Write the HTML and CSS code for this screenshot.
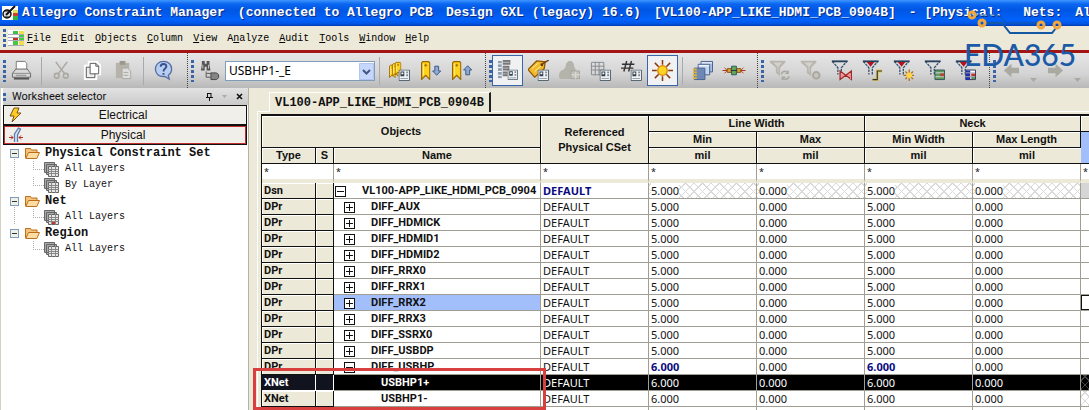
FILE: index.html
```html
<!DOCTYPE html>
<html lang="en">
<head>
    <meta charset="UTF-8">
    <meta name="viewport" content="width=device-width, initial-scale=1.0">
    <title>Allegro Constraint Manager</title>
    <link rel="stylesheet" href="styles.css">
</head>
<body>
    <!-- shared icon parts -->
    <svg class="defs" aria-hidden="true">
        <symbol id="badge" viewBox="0 0 12 12">
            <path d="M.5.5h11v11H.5z" fill="#eef2f5" stroke="#52616b"/>
            <path d="M2 2h4v5H2z" fill="#31404b"/><path d="M3 3h2v2H3z" fill="#fff"/>
            <path d="M8 2h2v2H8zM8 5h2v2H8zM2 9h8v1H2z" fill="#7f8d96"/>
        </symbol>
        <symbol id="funnel" viewBox="0 0 20 20">
            <path d="M1.5 1.5h17L12 9v8M1.5 1.5 8 9v8" fill="none" stroke="#34506e" stroke-width="1.5" stroke-dasharray="3 1"/>
            <path d="M1 1.500h18" stroke="#27405c" stroke-width="2"/>
        </symbol>
        <symbol id="funnel-off" viewBox="0 0 20 20">
            <path d="M1 1h18v2l-6 6v10l-5-4V9L1 3z" fill="#b8b6ad"/>
            <path d="M5 3h10l-4 5v6l-1-1V8z" fill="#d3d2cc"/>
        </symbol>
        <symbol id="bookmark" viewBox="0 0 10 20">
            <path d="M.7 2 2 .7h6L9.300 2v17.300L5 15 .7 19.300z" fill="#ffd21c" stroke="#9a6500" stroke-width="1.300"/>
            <path d="M5 3v3M3.500 4.500h3" stroke="#9a6500"/><path d="M2.500 3v12" stroke="#fff19a"/>
        </symbol>
        <symbol id="folder" viewBox="0 0 15 12">
            <path d="M.5 11V1.500h5l1 1.500H12v3" fill="#f7c27a" stroke="#b86f1d"/>
            <path d="M.8 11.500 3.500 5.500h11l-2.700 6z" fill="#ffdca2" stroke="#b86f1d"/>
        </symbol>
        <symbol id="sheets" viewBox="0 0 15 15">
            <path d="M.5.5h10v10H.5zM2.500 2.500h10v10h-10z" fill="#aaa" stroke="#666"/>
            <path d="M4.500 4.500h10v10h-10z" fill="#e6e6e6" stroke="#666"/>
            <path d="M4 7.500h11M4 9.500h11M4 11.500h11M7.500 4v11M11.500 4v11" stroke="#888"/>
        </symbol>
        <symbol id="arrow" viewBox="0 0 16 14">
            <path d="M0 7 8 0v4h8v6H8v4z" fill="#aaa9a2"/>
        </symbol>
    </svg>

    <header class="titlebar">
        <svg class="app-icon" viewBox="0 0 16 16">
            <path d="M0 1h16v14H0z" fill="#fff"/><path d="M11 5h5v3h-5z" fill="#dfe05a"/><path d="M11 8h5v3h-5z" fill="#d0402c"/><path d="M11 11h5v4h-5z" fill="#31b34a"/>
            <circle cx="5" cy="9" r="4" fill="#ddd" stroke="#111" stroke-width="1.500"/><path d="m4 10 9-9" stroke="#111" stroke-width="2"/><path d="M2 6h6M3 12h5" stroke="#111"/>
        </svg>
        <h1 class="title">
            <span>Allegro Constraint Manager</span>
            <span>(connected to Allegro PCB</span>
            <span>Design GXL (legacy) 16.6)</span>
            <span>[VL100-APP_LIKE_HDMI_PCB_0904B]</span>
            <span>- [Physical:</span>
            <span>&nbsp;Nets:</span>
            <span>Al</span>
        </h1>
    </header>

    <nav class="menubar">
        <span class="grip"></span>
        <svg class="menu-icon" viewBox="0 0 16 16">
            <path d="M0 0h16v16H0z" fill="#fff"/><path d="M5 1h5v3H5z" fill="#3fc04d"/><path d="M11 1h5v3h-5zM11 11h5v4h-5z" fill="#eee04a"/><path d="M5 7h5v3H5z" fill="#c52c22"/><path d="M5 11h5v4H5zM11 5h5v5h-5z" fill="#46c843"/>
            <path d="M0 4.500h16M0 7.500h16M0 10.500h16M0 15.500h16" stroke="#aab"/>
        </svg>
        <a href="#"><u>F</u>ile</a>
        <a href="#"><u>E</u>dit</a>
        <a href="#"><u>O</u>bjects</a>
        <a href="#"><u>C</u>olumn</a>
        <a href="#"><u>V</u>iew</a>
        <a href="#">A<u>n</u>alyze</a>
        <a href="#"><u>A</u>udit</a>
        <a href="#"><u>T</u>ools</a>
        <a href="#"><u>W</u>indow</a>
        <a href="#"><u>H</u>elp</a>
    </nav>

    <div class="toolbar">
        <div class="tool-group">
            <span class="grip"></span>
            <button class="tool" aria-label="Print"><svg viewBox="0 0 22 22"><path d="M5.500 10V1.500h9l2 2V10" fill="#fff" stroke="#777"/><path d="M1.500 14 5 9.500h12l3.500 4.500v4h-19z" fill="#d9d9d9" stroke="#666"/><path d="M2 14h18M5 16h11" stroke="#888"/><path d="M3 19.500h16" stroke="#555" stroke-width="2"/></svg></button>
            <span class="sep"></span>
            <button class="tool" aria-label="Cut" disabled><svg viewBox="0 0 22 22" fill="none" stroke="#aaa89f" stroke-width="1.600"><path d="m5 2 9 12M17 2 8 14"/><circle cx="6" cy="16.500" r="2.500"/><circle cx="15.500" cy="16.500" r="2.500"/></svg></button>
            <button class="tool" aria-label="Copy"><svg viewBox="0 0 22 22"><path d="M2 5h4V1h10l4 4v11h-4v5H2z" fill="#fff"/><path d="M4.500 7.500h9v11h-9z" fill="#eee" stroke="#555"/><path d="M8.500 3.500h6l3 3v8h-9z" fill="#fff" stroke="#555"/><path d="M14.500 3.500v3h3" fill="none" stroke="#555"/></svg></button>
            <button class="tool" aria-label="Paste" disabled><svg viewBox="0 0 22 22"><path d="M3 3h14v16H3z" fill="#b5b3aa"/><path d="M7 1h6v4H7z" fill="#9a988f"/><path d="M9.500 8.500h6l3 3v8h-9z" fill="#ddd" stroke="#aaa89f"/><path d="M11 13h5M11 16h5" stroke="#aaa89f"/></svg></button>
            <span class="sep"></span>
            <button class="tool" aria-label="Help"><svg viewBox="0 0 22 22"><path d="M11 1.500c5 0 8.500 3.300 8.500 8 0 3-1 5-3.500 6.500l1 4-4.500-2.800C6 18 2.500 14 2.500 9.500s3.500-8 8.500-8z" fill="#b9cdf0" stroke="#566fa6" stroke-width="1.400"/><path d="M8 7c.2-4 6.500-3.600 6 0-.3 2-3 2.200-3 5M11 13.500v2" fill="none" stroke="#34508f" stroke-width="2"/></svg></button>
        </div>

        <div class="tool-group">
            <span class="grip"></span>
            <button class="tool" aria-label="Find object"><svg viewBox="0 0 22 22"><path d="M3 1h3v3h2V1h3v4l1 6H8V7H6v4H2l1-6z" fill="#555"/><path d="M4 5v4M10 5v4" stroke="#ccc"/><path d="M7.500 12v6H12M8 14h5" fill="none" stroke="#555"/><path d="M12.500 13.500h6l2 2v3l-2 2h-6z" fill="#858585" stroke="#444"/></svg></button>
            <label class="combo">
                <select aria-label="Object name"><option>USBHP1-_E</option></select>
                <svg class="combo-arrow" viewBox="0 0 15 17"><path d="M.5.5h14v16H.5z" fill="#c7d7fb" stroke="#afc4f2"/><path d="m4 7 3.500 3.500L11 7" fill="none" stroke="#40587f" stroke-width="2"/></svg>
            </label>
            <span class="sep"></span>
            <button class="tool" aria-label="Bookmarks"><svg viewBox="0 0 22 22"><use href="#bookmark" x="0" y="4" width="7" height="16"/><use href="#bookmark" x="3" y="2" width="7" height="17"/><use href="#bookmark" x="6" y="0" width="7" height="18"/><use href="#badge" x="10" y="10" width="12" height="12"/></svg></button>
            <button class="tool" aria-label="Next bookmark"><svg viewBox="0 0 22 22"><use href="#bookmark" x="1" y="1" width="10" height="20"/><path d="M15.500 6.500h4v5h2.200L17.500 16l-4.300-4.500h2.300z" fill="#8ea9d4" stroke="#3d5784"/></svg></button>
            <button class="tool" aria-label="Previous bookmark"><svg viewBox="0 0 22 22"><use href="#bookmark" x="1" y="1" width="10" height="20"/><path d="M15.500 15.500h4v-5h2.200L17.500 6l-4.300 4.500h2.300z" fill="#8ea9d4" stroke="#3d5784"/></svg></button>
        </div>

        <div class="tool-group">
            <span class="grip"></span>
            <button class="tool pressed" aria-label="Worksheet rows"><svg viewBox="0 0 22 22"><path d="M1 1h4v18H1z" fill="#8fa0b3"/><path d="M1 4h4M1 8h4M1 12h4M1 16h4" stroke="#fff"/><path d="M6 0h8v5H6zM6 6h7v5H6zM6 12h5v5H6z" fill="#777"/><path d="M6 2.500h7M6 8.500h6M6 14.500h4" stroke="#bbb"/><use href="#badge" x="11" y="10" width="11" height="11"/></svg></button>
            <button class="tool" aria-label="Tag"><svg viewBox="0 0 22 22"><path d="m0 10 9-9 9 1-1 7-10 9z" fill="#f3b92d" stroke="#8d5500" stroke-width="1.300"/><path d="m4 9 7-6M7 12l8-7" stroke="#fff0a0"/><circle cx="14.500" cy="5" r="1.500" fill="#633b00"/><path d="m15 4 7-4" stroke="#7b3d11" stroke-width="1.500"/><use href="#badge" x="10" y="10" width="12" height="12"/></svg></button>
            <button class="tool" aria-label="Group" disabled><svg viewBox="0 0 22 22"><path d="M7 7c0-8 9-8 9 0l2 4c3 2 2 8 0 9H2c-4-2-2-9 3-10z" fill="#b5b4aa"/><path d="M12.500 11.500h9v8h-9z" fill="#c3c1b8" stroke="#a5a49c"/><path d="M13 15.500h9M17.500 12v8" stroke="#ddd"/></svg></button>
            <button class="tool" aria-label="Grid"><svg viewBox="0 0 22 22"><path d="M1.500 2.500h13v13h-13zM1 6.500h14M1 10.500h14M5.500 2v14M9.500 2v14" fill="none" stroke="#85898f"/><use href="#badge" x="10" y="10" width="12" height="12"/></svg></button>
            <button class="tool" aria-label="Numbers"><svg viewBox="0 0 22 22"><path d="m6 1-3 11M11 1 8 12M1 4.500h13M0 8.500h13" stroke="#333" stroke-width="1.500"/><use href="#badge" x="10" y="10" width="12" height="12"/></svg></button>
            <button class="tool pressed" aria-label="Highlight"><svg viewBox="0 0 22 22"><path d="M11 0v5M11 17v5M0 11h5M17 11h5M3 3l4 4M15 15l4 4M19 3l-4 4M7 15l-4 4" stroke="#8a3b0c" stroke-width="1.600"/><circle cx="11" cy="11" r="5" fill="#ffd323" stroke="#d88500" stroke-width="1.300"/></svg></button>
            <span class="sep"></span>
            <button class="tool" aria-label="Windows"><svg viewBox="0 0 22 22"><path d="M9.500 1.500h12v11h-12z" fill="#a9bee3" stroke="#43608f"/><path d="M6.500 4.500h12v11h-12z" fill="#c7d6ef" stroke="#43608f"/><path d="M2.500 8.500h11v12h-11z" fill="#6e88b5" stroke="#43608f"/><path d="M7 6h11M10 3h11" stroke="#fff"/><path d="M1 10h4M1 13h4M1 16h4M1 19h4" stroke="#e4b530" stroke-width="2"/></svg></button>
            <button class="tool" aria-label="Connector"><svg class="wide" viewBox="0 0 24 22"><path d="M0 11h24" stroke="#a92d18"/><path d="m2 8 3 3-3 3M22 8l-3 3 3 3" fill="none" stroke="#b9401e"/><path d="M5 9h4v4H5zM15 9h4v4h-4z" fill="#dd9f2d" stroke="#8b5a13"/><path d="M9.500 6.500h5v9h-5z" fill="#67a85b" stroke="#24595d"/><path d="M9 11h6" stroke="#234"/></svg></button>
        </div>

        <div class="tool-group">
            <span class="grip"></span>
            <button class="tool" aria-label="Refresh filter" disabled><svg viewBox="0 0 22 22"><use href="#funnel-off" width="18" height="18"/><path d="M13 15c1-4 6-4 7-1M21 17c-1 4-6 4-7 1M20 11v3h-3M14 21v-3h3" fill="none" stroke="#aaa89f" stroke-width="1.500"/></svg></button>
            <button class="tool" aria-label="Clear filter" disabled><svg viewBox="0 0 22 22"><use href="#funnel-off" width="18" height="18"/><circle cx="17" cy="16" r="3.500" fill="#c5c4bd" stroke="#aaa89f" stroke-width="2"/></svg></button>
            <button class="tool" aria-label="Filter nets"><svg viewBox="0 0 22 22"><use href="#funnel" width="18" height="18"/><path d="M9.500 11.500 15.500 16l6-4.500v9L15.500 16l-6 4.500z" fill="#e99" stroke="#a22727" stroke-width="1.300"/></svg></button>
            <button class="tool" aria-label="Filter pins"><svg viewBox="0 0 22 22"><use href="#funnel" width="18" height="18"/><path d="M5 2h8L9 7z" fill="#b01421"/><path d="M11 20.500h5v-9h5" fill="none" stroke="#e0c65a" stroke-width="3"/><path d="M11 20.500h5v-9h5" fill="none" stroke="#333" stroke-width="1.200"/></svg></button>
            <button class="tool" aria-label="Filter new"><svg viewBox="0 0 22 22"><use href="#funnel" width="18" height="18"/><path d="M5 2h8L9 7z" fill="#b01421"/><path d="M17 10v12M11 16h12M13 12l8 8M21 12l-8 8" stroke="#ad6d1a" stroke-width="1.300"/><circle cx="17" cy="16" r="3" fill="#ffd54a"/></svg></button>
            <button class="tool" aria-label="Filter sheet"><svg viewBox="0 0 22 22"><use href="#funnel" width="18" height="18"/><path d="M11.500 10.500h10v10h-10z" fill="#5d9a60" stroke="#355"/><path d="M12 13.500h9M12 17.500h9" stroke="#dedede"/><path d="M17 14h4v3h-4z" fill="#b64435"/></svg></button>
            <button class="tool" aria-label="Filter columns"><svg viewBox="0 0 22 22"><use href="#funnel" width="18" height="18"/><path d="M5 2h8L9 7z" fill="#b01421"/><path d="M11.500 10.500h10v10h-10z" fill="#fff" stroke="#335"/><path d="M11 11h5v10h-5z" fill="#2330a0"/><path d="M17 14h4v3h-4z" fill="#c53526"/><path d="M17 17h4v3h-4z" fill="#519853"/><path d="M11 13.500h10M11 17.500h10" stroke="#aab"/></svg></button>
        </div>

        <div class="tool-group">
            <span class="grip"></span>
            <button class="tool" aria-label="Back" disabled><svg viewBox="0 0 22 22"><use href="#arrow" x="3" y="4" width="16" height="14"/></svg></button>
            <button class="tool-more" aria-label="Back history" disabled><svg viewBox="0 0 7 4"><path d="M0 0h7L3.500 4z" fill="#aaa9a2"/></svg></button>
            <button class="tool" aria-label="Forward" disabled><svg class="flip" viewBox="0 0 22 22"><use href="#arrow" x="3" y="4" width="16" height="14"/></svg></button>
            <button class="tool-more" aria-label="Forward history" disabled><svg viewBox="0 0 7 4"><path d="M0 0h7L3.500 4z" fill="#aaa9a2"/></svg></button>
        </div>
    </div>

    <div class="workspace">
        <aside class="selector">
            <div class="selector-head">
                <span class="grip small"></span>
                <h2>Worksheet selector</h2>
                <button class="head-btn" aria-label="Pin"><svg viewBox="0 0 9 9"><path d="M2.500 1v4M6 1v4M2 1.500h4M1 5.500h7M4.500 6v3" fill="none" stroke="#111"/></svg></button>
                <button class="head-btn" aria-label="Options"><svg viewBox="0 0 9 9"><path d="M2 3h5L4.500 6z" fill="#aaa"/></svg></button>
                <button class="head-btn" aria-label="Close"><svg viewBox="0 0 9 9"><path d="m2 2 5 5M7 2 2 7" stroke="#111" stroke-width="1.600"/></svg></button>
            </div>
            <button class="domain"><svg viewBox="0 0 14 16"><path d="M5 1h5L8 6h4L3 15l2-6H1z" fill="#ffc928" stroke="#7a5410"/></svg>Electrical</button>
            <button class="domain active"><svg viewBox="0 0 14 16"><path d="M5.500 15V7l4-6 2 1-3 6v7" fill="#dbe6f5" stroke="#5c7cab" stroke-width="1.300"/><path d="M0 10.500h4M14 10.500h-4M2 8.500l2 2-2 2M12 8.500l-2 2 2 2" fill="none" stroke="#b02828"/></svg>Physical</button>
            <ul class="tree">
                <li>
                    <div class="branch"><button class="toggle" aria-label="Collapse"></button><svg class="folder"><use href="#folder"/></svg>Physical Constraint Set</div>
                    <ul>
                        <li class="leaf"><svg><use href="#sheets"/></svg>All Layers</li>
                        <li class="leaf"><svg><use href="#sheets"/></svg>By Layer</li>
                    </ul>
                </li>
                <li>
                    <div class="branch"><button class="toggle" aria-label="Collapse"></button><svg class="folder"><use href="#folder"/></svg>Net</div>
                    <ul>
                        <li class="leaf"><svg viewBox="0 0 15 15"><use href="#sheets"/><path d="M8 12h3v2H8z" fill="#c33"/></svg>All Layers</li>
                    </ul>
                </li>
                <li>
                    <div class="branch"><button class="toggle" aria-label="Collapse"></button><svg class="folder"><use href="#folder"/></svg>Region</div>
                    <ul>
                        <li class="leaf"><svg><use href="#sheets"/></svg>All Layers</li>
                    </ul>
                </li>
            </ul>
        </aside>

        <main class="sheet">
            <div class="tabs"><button class="tab">VL100-APP_LIKE_HDMI_PCB_0904B</button></div>
            <div class="grid-wrap">
            <table class="grid">
                <colgroup><col class="c-type"><col class="c-s"><col class="c-name"><col class="c-val"><col class="c-val"><col class="c-val"><col class="c-val"><col class="c-val"><col></colgroup>
                <thead>
                    <tr><th colspan="3" rowspan="2">Objects</th><th rowspan="3">Referenced<br>Physical CSet</th><th colspan="2">Line Width</th><th colspan="2">Neck</th><th></th></tr>
                    <tr><th>Min</th><th>Max</th><th>Min Width</th><th>Max Length</th><th rowspan="2" class="current"></th></tr>
                    <tr><th>Type</th><th>S</th><th>Name</th><th>mil</th><th>mil</th><th>mil</th><th>mil</th></tr>
                </thead>
                <tbody>
                    <tr class="filter"><td colspan="2">*</td><td>*</td><td>*</td><td>*</td><td>*</td><td>*</td><td>*</td><td>*</td></tr>
                    <tr class="design"><th>Dsn</th><th></th><td class="name lvl0"><button class="box minus" aria-label="Collapse"></button>VL100-APP_LIKE_HDMI_PCB_0904</td><td class="set">DEFAULT</td><td class="hatch"><span>5.000</span></td><td class="hatch"><span>0.000</span></td><td class="hatch"><span>5.000</span></td><td class="hatch"><span>0.000</span></td><td class="gray"></td></tr>
                    <tr><th>DPr</th><th></th><td class="name"><button class="box" aria-label="Expand"></button>DIFF_AUX</td><td>DEFAULT</td><td>5.000</td><td>0.000</td><td>5.000</td><td>0.000</td><td></td></tr>
                    <tr><th>DPr</th><th></th><td class="name"><button class="box" aria-label="Expand"></button>DIFF_HDMICK</td><td>DEFAULT</td><td>5.000</td><td>0.000</td><td>5.000</td><td>0.000</td><td></td></tr>
                    <tr><th>DPr</th><th></th><td class="name"><button class="box" aria-label="Expand"></button>DIFF_HDMID1</td><td>DEFAULT</td><td>5.000</td><td>0.000</td><td>5.000</td><td>0.000</td><td></td></tr>
                    <tr><th>DPr</th><th></th><td class="name"><button class="box" aria-label="Expand"></button>DIFF_HDMID2</td><td>DEFAULT</td><td>5.000</td><td>0.000</td><td>5.000</td><td>0.000</td><td></td></tr>
                    <tr><th>DPr</th><th></th><td class="name"><button class="box" aria-label="Expand"></button>DIFF_RRX0</td><td>DEFAULT</td><td>5.000</td><td>0.000</td><td>5.000</td><td>0.000</td><td></td></tr>
                    <tr><th>DPr</th><th></th><td class="name"><button class="box" aria-label="Expand"></button>DIFF_RRX1</td><td>DEFAULT</td><td>5.000</td><td>0.000</td><td>5.000</td><td>0.000</td><td></td></tr>
                    <tr><th>DPr</th><th></th><td class="name current"><button class="box" aria-label="Expand"></button>DIFF_RRX2</td><td>DEFAULT</td><td>5.000</td><td>0.000</td><td>5.000</td><td>0.000</td><td class="cursor"></td></tr>
                    <tr><th>DPr</th><th></th><td class="name"><button class="box" aria-label="Expand"></button>DIFF_RRX3</td><td>DEFAULT</td><td>5.000</td><td>0.000</td><td>5.000</td><td>0.000</td><td></td></tr>
                    <tr><th>DPr</th><th></th><td class="name"><button class="box" aria-label="Expand"></button>DIFF_SSRX0</td><td>DEFAULT</td><td>5.000</td><td>0.000</td><td>5.000</td><td>0.000</td><td></td></tr>
                    <tr><th>DPr</th><th></th><td class="name"><button class="box" aria-label="Expand"></button>DIFF_USBDP</td><td>DEFAULT</td><td>5.000</td><td>0.000</td><td>5.000</td><td>0.000</td><td></td></tr>
                    <tr><th>DPr</th><th></th><td class="name"><button class="box minus" aria-label="Collapse"></button>DIFF_USBHP</td><td>DEFAULT</td><td class="set">6.000</td><td>0.000</td><td class="set">6.000</td><td>0.000</td><td></td></tr>
                    <tr class="selected"><th>XNet</th><th></th><td class="name lvl2">USBHP1+</td><td>DEFAULT</td><td>6.000</td><td>0.000</td><td>6.000</td><td>0.000</td><td class="hatch"></td></tr>
                    <tr><th>XNet</th><th></th><td class="name lvl2">USBHP1-</td><td>DEFAULT</td><td>6.000</td><td>0.000</td><td>6.000</td><td>0.000</td><td class="hatch"></td></tr>
                    <tr><th></th><th></th><td class="name"></td><td></td><td></td><td></td><td></td><td></td><td></td></tr>
                </tbody>
            </table>
            <div class="callout"></div>
            </div>
        </main>
    </div>

    <div class="watermark">
        <svg viewBox="0 0 110 30">
            <path d="M12 7h22l9 8h30" fill="none" stroke="#1457a3"/>
            <path d="M22 15h16l8 10h42l4-5" fill="none" stroke="#1457a3" stroke-width="2"/>
            <g fill="none" stroke="#f0a63c" stroke-width="3"><circle cx="8" cy="7" r="3"/><circle cx="18" cy="15" r="3"/><circle cx="77" cy="17" r="3"/><circle cx="93" cy="17" r="3"/></g>
        </svg>
        <span>EDA365</span>
    </div>
</body>
</html>
```
FILE: styles.css
```css
* {
    box-sizing: border-box;
}
body {
    margin: 0;
    height: 100vh;
    display: flex;
    flex-direction: column;
    overflow: hidden;
    position: relative;
    background: #ece9d8;
    color: #111;
    font-family: "Noto Sans", sans-serif;
    font-size: 11px;
}
button {
    border: 0;
    padding: 0;
    background: none;
    color: inherit;
    font: inherit;
}
.defs {
    position: absolute;
    width: 0;
    height: 0;
}

/* title and menu */
.titlebar {
    flex: none;
    display: flex;
    align-items: center;
    gap: 4px;
    height: 26px;
    padding-left: 2px;
    overflow: hidden;
    background: linear-gradient(#3d95ff 0, #0a66f0 4px, #0056e4 10px, #0262fb 20px, #0054e0 24px, #0038b0 26px);
}
.app-icon {
    flex: none;
    width: 16px;
    height: 16px;
}
.title {
    display: flex;
    gap: 13px;
    margin: 0;
    color: #fff;
    font: bold 13px/26px "Liberation Mono", monospace;
    text-shadow: 1px 1px #0a2a80;
    white-space: nowrap;
}
.menubar {
    flex: none;
    display: flex;
    align-items: center;
    gap: 10px;
    height: 24px;
    padding-left: 3px;
    font: 10px/24px "Liberation Mono", monospace;
}
.menubar a {
    padding-top: 2px;
    color: #000;
    text-decoration: none;
}
.menu-icon {
    width: 16px;
    height: 16px;
    margin: 0 -7px 0 -8px;
}
.grip {
    flex: none;
    width: 3px;
    height: 22px;
    background: repeating-linear-gradient(#3a64a8 0 3px, transparent 3px 5px);
}
.menubar .grip {
    height: 18px;
}
.grip.small {
    height: 8px;
}

/* toolbar */
.toolbar {
    flex: none;
    display: flex;
    height: 38px;
    overflow: hidden;
    border-top: 3px solid #a31515;
    background: linear-gradient(#e6e6e6, #d4d4d4 60%, #b8b8b8);
}
.tool-group {
    flex: none;
    display: flex;
    align-items: center;
    padding: 0 8px 0 3px;
    border-right: 1px dotted #444;
}
.tool-group:last-child {
    padding-right: 0;
    border-right: 0;
}
.tool {
    display: flex;
    align-items: center;
    justify-content: center;
    width: 31px;
    height: 31px;
}
.tool svg {
    width: 21px;
    height: 21px;
}
.tool .wide {
    width: 24px;
}
.tool .flip {
    transform: scaleX(-1);
}
.tool.pressed {
    border: 1px solid #3a64a8;
    background: #f0f1f3;
}
.tool-more {
    display: flex;
    align-items: flex-end;
    justify-content: center;
    width: 13px;
    height: 22px;
}
.tool-more svg {
    width: 7px;
    height: 4px;
}
.sep {
    width: 9px;
    height: 28px;
    background: linear-gradient(#aaa, #aaa) center / 1px 100% no-repeat;
}
.combo {
    position: relative;
    width: 150px;
}
.combo select {
    display: block;
    appearance: none;
    width: 100%;
    height: 20px;
    padding: 0 20px 0 3px;
    border: 1px solid #7f9db9;
    border-radius: 0;
    background: #fff;
    color: #000;
    font: 12px "Noto Sans", sans-serif;
}
.combo-arrow {
    position: absolute;
    top: 2px;
    right: 1px;
    width: 15px;
    height: 17px;
    pointer-events: none;
}

/* worksheet selector */
.workspace {
    flex: 1;
    display: flex;
    min-height: 0;
}
.selector {
    flex: none;
    width: 249px;
    padding-left: 2px;
    border-left: 1px solid #d6d3c4;
    border-right: 1px solid #b5b3a6;
    background: #fff;
}
.selector-head {
    display: flex;
    align-items: center;
    gap: 6px;
    height: 17px;
    padding-right: 4px;
    background: linear-gradient(#e2e2e2, #cacaca);
}
.selector-head h2 {
    flex: 1;
    margin: 0;
    font: 11px/16px Roboto, sans-serif;
}
.head-btn {
    width: 9px;
    height: 9px;
    display: flex;
}
.domain {
    position: relative;
    display: block;
    width: 244px;
    height: 20px;
    padding-right: 4px;
    border: 1px solid #111;
    background: #f1efe9;
    font: 12px/18px "Liberation Sans", sans-serif;
}
.domain.active {
    box-shadow: inset 0 0 0 1px #c03030;
}
.domain svg {
    position: absolute;
    left: 5px;
    top: 1px;
    width: 14px;
    height: 16px;
}
.tree, .tree ul {
    margin: 0;
    padding: 0;
    list-style: none;
}
.tree {
    padding-left: 7px;
    font: 10px/16px "Liberation Mono", monospace;
}
.tree > li:not(:last-child) {
    background: repeating-linear-gradient(#aaa 0 1px, transparent 1px 2px) 4px 8px / 1px 100% no-repeat;
}
.branch {
    display: flex;
    align-items: center;
    height: 16px;
    font-size: 12px;
    font-weight: bold;
}
.folder {
    width: 15px;
    height: 12px;
    margin: 0 5px 0 6px;
}
.toggle {
    width: 9px;
    height: 9px;
    border: 1px solid #7f9db9;
    background: linear-gradient(#333, #333) center / 5px 1px no-repeat #f0f0ea;
}
.tree ul {
    padding-left: 23px;
}
.leaf {
    display: flex;
    align-items: center;
    gap: 6px;
    height: 16px;
    padding-left: 11px;
    background:
        repeating-linear-gradient(#aaa 0 1px, transparent 1px 2px) 0 0 / 1px 8px no-repeat,
        repeating-linear-gradient(90deg, #aaa 0 1px, transparent 1px 2px) 0 8px / 11px 1px no-repeat;
}
.leaf svg {
    width: 15px;
    height: 15px;
}

/* worksheet */
.sheet {
    flex: 1;
    min-width: 0;
    padding: 0 0 0 8px;
    overflow: hidden;
}
.tabs {
    height: 24px;
    padding: 4px 0 0 12px;
    border-bottom: 1px solid #fff;
}
.tab {
    height: 20px;
    padding: 0 5px;
    border-left: 1px solid #fff;
    border-top: 1px solid #fff;
    border-right: 2px solid #222;
    background: #ece9d8;
    font: bold 12px/20px "Liberation Mono", monospace;
}
.grid-wrap {
    position: relative;
    padding: 2px 0 0 3px;
    border-left: 1px solid #fff;
}
.grid {
    table-layout: fixed;
    width: 100%;
    border-spacing: 0;
    border-left: 1px solid #111;
    border-top: 2px solid #111;
    background: #fff;
}
.c-type {
    width: 54px;
}
.c-s {
    width: 18px;
}
.c-name {
    width: 207px;
}
.c-val {
    width: 108px;
}
.grid th, .grid td {
    height: 16px;
    padding: 0 2px;
    border-right: 1px solid #a09e92;
    border-bottom: 1px solid #a09e92;
    font-size: 11px;
    line-height: 15px;
    text-align: left;
    white-space: nowrap;
    overflow: hidden;
}
.grid tr > :last-child {
    border-right: 0;
}
.grid th {
    border-color: #111;
    background: #ece9d8;
    box-shadow: inset 1px 1px #fff;
    font-family: Roboto, sans-serif;
    font-weight: bold;
}
.grid thead th {
    font-family: "Liberation Sans", sans-serif;
    text-align: center;
}
.grid .filter td {
    height: 19px;
    border-bottom: 4px solid #ece9d8;
    font-size: 9px;
    line-height: 14px;
}
.grid .name {
    padding-left: 10px;
    font-family: Roboto, sans-serif;
    font-weight: bold;
}
.grid .name.lvl0 {
    padding-left: 1px;
}
.grid .name.lvl2 {
    padding-left: 47px;
}
.box {
    width: 11px;
    height: 11px;
    margin-right: 16px;
    border: 1px solid #111;
    vertical-align: middle;
    background:
        linear-gradient(#111, #111) center / 7px 1px no-repeat,
        linear-gradient(#111, #111) center / 1px 7px no-repeat #fff;
}
.box.minus {
    background: linear-gradient(#111, #111) center / 7px 1px no-repeat #fff;
}
.grid .current {
    background: #a3bffb;
    box-shadow: none;
}
.grid .set {
    color: #0a0a80;
    font-weight: bold;
}
.hatch {
    background:
        repeating-linear-gradient(45deg, #dadada 0 1px, transparent 1px 6px),
        repeating-linear-gradient(-45deg, #dadada 0 1px, transparent 1px 6px);
}
.hatch span {
    background: #fff;
}
.gray {
    background: #d6d6d6;
}
.cursor {
    box-shadow: inset 1px 1px #111, inset 0 -1px #111;
}
.grid .selected td, .grid .selected th {
    color: #fff;
    background-color: #000;
}
.grid .selected th {
    background: #11131f;
    border-color: #fff;
    box-shadow: none;
}
.selected .hatch {
    background:
        repeating-linear-gradient(45deg, #444 0 1px, transparent 1px 6px),
        repeating-linear-gradient(-45deg, #444 0 1px, transparent 1px 6px);
}

/* drawn over the page */
.callout {
    position: absolute;
    left: -5px;
    top: 256px;
    width: 293px;
    height: 42px;
    border: 3px solid #d84040;
}
.watermark {
    position: absolute;
    top: 8px;
    right: 15px;
    width: 110px;
    color: #1a5aa6;
    font: 500 30px/32px Lato, sans-serif;
    pointer-events: none;
}
.watermark svg {
    display: block;
    width: 110px;
    height: 30px;
}
```
